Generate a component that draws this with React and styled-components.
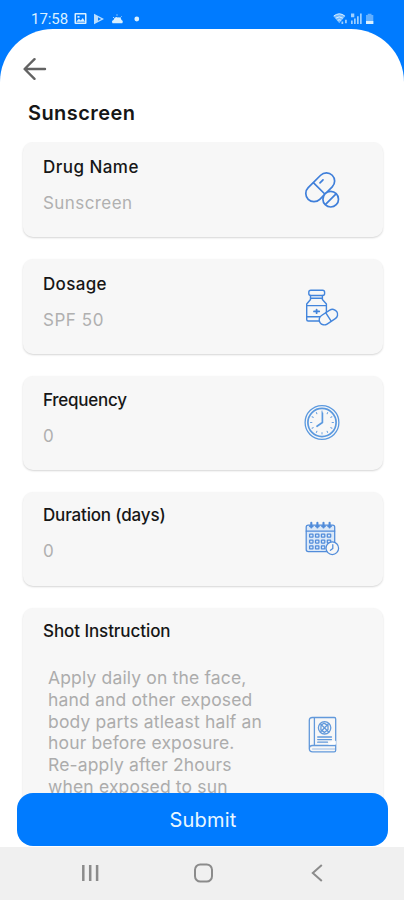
import React from "react";
import styled, { createGlobalStyle } from "styled-components";

const GlobalStyle = createGlobalStyle`
  * { box-sizing: border-box; }
  body { margin: 0; background: #007bff; }
`;

const Screen = styled.div`
  display: flex;
  flex-direction: column;
  width: 404px;
  height: 900px;
  overflow: hidden;
  background: #007bff;
  font-family: Inter, sans-serif;
`;

const StatusBar = styled.header`
  display: flex;
  align-items: center;
  flex: none;
  height: 29px;
  padding: 9px 28px 0 31px;
  color: #d9f0ff;
`;

const Clock = styled.span`
  width: 43px;
  font: 400 15px/20px Roboto, sans-serif;
  letter-spacing: -0.05px;
`;

const StatusIcons = styled.svg`
  display: block;
  margin-left: ${(p) => (p.$end ? "auto" : "0")};
`;

const Sheet = styled.main`
  display: flex;
  flex-direction: column;
  flex: 1;
  min-height: 0;
  background: #fff;
  border-radius: 53px 53px 0 0;
`;

const BackButton = styled.button`
  display: block;
  flex: none;
  width: 24px;
  height: 24px;
  margin: 28px 0 0 23px;
  padding: 0;
  border: 0;
  background: none;
  color: #636363;
`;

const Title = styled.h1`
  flex: none;
  margin: 19px 0 0 28px;
  font-size: 20px;
  line-height: 26px;
  font-weight: 600;
  letter-spacing: 0.42px;
  color: #161616;
`;

const Fields = styled.section`
  display: flex;
  flex-direction: column;
  gap: 22px;
  height: 668px;
  flex: none;
  margin-top: 16px;
  padding: 0 21px 0 23px;
  overflow: hidden;
`;

const Card = styled.article`
  display: flex;
  flex: none;
  justify-content: space-between;
  align-items: ${(p) => (p.$tall ? "flex-start" : "center")};
  height: ${(p) => p.$height}px;
  padding: 0 39px 0 20px;
  border-radius: 10px;
  background: #f7f7f7;
  box-shadow: 0 1px 2px rgba(0, 0, 0, 0.17);
`;

const CardText = styled.div`
  align-self: flex-start;
  padding-top: ${(p) => p.$top}px;
`;

const Label = styled.h2`
  margin: 0;
  font-size: 17px;
  line-height: 24px;
  font-weight: 500;
  letter-spacing: ${(p) => p.$tracking || 0}px;
  color: #161616;
`;

const Value = styled.p`
  margin: 12px 0 0;
  font-size: 17px;
  line-height: 24px;
  letter-spacing: ${(p) => p.$tracking || 0}px;
  color: #b0b0b0;
`;

const Instruction = styled.p`
  width: 224px;
  margin: 24px 0 0 5px;
  font-size: 17.5px;
  line-height: 21.75px;
  letter-spacing: 0.16px;
  color: #acacac;
  white-space: nowrap;
`;

const FieldIcon = styled.svg`
  flex: none;
  width: 42px;
  height: 42px;
  margin-top: ${(p) => p.$offset || 0}px;
  fill: none;
  stroke: ${(p) => p.$tone || "#4385dc"};
  stroke-width: ${(p) => p.$weight || 1.5};
  stroke-linecap: round;
  stroke-linejoin: round;
`;

const Submit = styled.button`
  position: relative;
  flex: none;
  height: 53px;
  margin: -17px 16px 0 17px;
  padding: 2px 0 0 1px;
  border: 0;
  border-radius: 16px;
  background: #007bff;
  color: #e9f7ff;
  font: 400 20px/51px Inter, sans-serif;
  letter-spacing: 0.2px;
`;

const NavBar = styled.nav`
  display: flex;
  align-items: center;
  justify-content: space-between;
  flex: none;
  height: 53px;
  padding: 0 76px 1px 79px;
  background: #f0f0f0;
  color: #8b8b8b;
`;

const NavIcon = styled.svg`
  display: block;
  width: 22px;
  height: 22px;
  fill: none;
  stroke: currentColor;
  stroke-width: 2;
`;

const PillsIcon = () => (
  <FieldIcon viewBox="0 0 42 42" $weight="1.7" $tone="#3f7fda">
    <rect x="1.1" y="10.2" width="34" height="16.4" rx="8.2" transform="rotate(-45 18 18.2)" />
    <path d="M11.6 13.8 22.8 25M18 13.8l3-3" />
    <circle cx="28.7" cy="30.2" r="7.8" fill="#f7f7f7" />
    <path d="m23.8 35.2 10-10" />
  </FieldIcon>
);

const BottleIcon = () => (
  <FieldIcon viewBox="0 0 42 42" $weight="1.4">
    <rect x="6.8" y="4.2" width="15.8" height="5.3" rx="2" />
    <path d="M8.5 9.5v4L4.7 18v15.5q0 1.5 1.5 1.5h16.5q1.7 0 1.7-1.5V18l-4-4.5v-4M9 12.3h11M4.7 19.6h19.7M4.7 30.8h15" />
    <path d="M12 25.4h5.2M14.6 23.6v3.6" strokeWidth="1.8" />
    <rect x="16.4" y="26" width="20" height="10.2" rx="5.1" fill="#f7f7f7" transform="rotate(-33 26.4 31.1)" />
    <path d="m23.8 26.8 5.2 8" />
  </FieldIcon>
);

const ticks = Array.from({ length: 12 }, (_, i) => i * 30);

const ClockIcon = () => (
  <FieldIcon viewBox="0 0 42 42" $weight="1.3" $tone="#5b99df">
    <circle cx="20" cy="20.5" r="16.9" />
    <circle cx="20" cy="20.5" r="14.1" strokeWidth="1.7" />
    {ticks.map((angle) => (
      <path key={angle} d="M20 9v1.4" strokeWidth="0.9" transform={`rotate(${angle} 20 20.5)`} />
    ))}
    <path d="M20.4 11v9.5l-5.4 3.8" strokeWidth="1.7" />
  </FieldIcon>
);

const CalendarIcon = () => (
  <FieldIcon viewBox="0 0 42 42" $weight="1.25" $tone="#518cda">
    <rect x="4.2" y="7" width="28.5" height="26.5" rx="2" fill="#dce9f8" />
    <path d="M4.2 13h28.5" />
    {[9.3, 15.4, 21.5, 27.6].map((x) => (
      <path key={x} d={`M${x} 4.8v4.6M${x - 1.3} 8.2h2.6`} strokeWidth="2.1" />
    ))}
    {[16.2, 22, 27.8].map((y) =>
      [7.6, 13.5, 19.4, 25.3].map((x) => (
        <rect key={`${x}-${y}`} x={x} y={y} width="3.4" height="3" rx="0.4" />
      ))
    )}
    <circle cx="30.3" cy="30.2" r="6.3" fill="#f7f7f7" />
    <path d="M30.8 26.7v3.8l-2.4 1.8" />
  </FieldIcon>
);

const BookIcon = () => (
  <FieldIcon viewBox="0 0 42 42" $weight="1.3" $tone="#6299db" $offset="106">
    <path d="M10.4 3.5h22q1.3 0 1.3 1.5v31.2q0 1.7-1.5 1.7H10.6q-3.3 0-3.3-3.3V6.5q0-3 3.1-3ZM12.4 3.5v28M7.3 34.6q0-3.1 3.3-3.1h23.1" />
    <path d="M10.5 35h23" strokeWidth="0.6" />
    <circle cx="22.6" cy="13.8" r="6.2" />
    <path d="m18.6 10 8 8M26.5 9.8l-7.8 8M19 11.6l3-2.5 4 2.5v4l-3.6 2.8-3.5-2.5ZM15.7 23h13.8M15.7 25.6h13.8M15.7 28.2h9.8" />
    <path d="M27 30q2-3.3 6.7-2.8v2.8Z" fill="#fff" stroke="#fff" strokeWidth="0.7" />
  </FieldIcon>
);

const fields = [
  { label: "Drug Name", value: "Sunscreen", height: 95, top: 13, Icon: PillsIcon, lt: 0.46, vt: 0.42 },
  { label: "Dosage", value: "SPF 50", height: 95, top: 13, Icon: BottleIcon, lt: 0.33, vt: 0.55 },
  { label: "Frequency", value: "0", height: 94, top: 12, Icon: ClockIcon, lt: -0.25, vt: 0 },
  { label: "Duration (days)", value: "0", height: 94, top: 11, Icon: CalendarIcon, lt: -0.16, vt: 0 },
];

export default function App() {
  return (
    <>
      <GlobalStyle />
      <Screen>
        <StatusBar>
          <Clock>17:58</Clock>
          <StatusIcons width="70" height="16" viewBox="0 0 70 16" fill="currentColor">
            <path fillRule="evenodd" d="M1.5 2h10q1 0 1 1v9q0 1-1 1h-10q-1 0-1-1V3q0-1 1-1ZM2 3.5v8h9v-8Z" />
            <path d="m2.3 10.8 2.5-3 2 1.7 2-2.6 2.2 3.9ZM3.5 5h2v1.7h-2Z" />
            <path d="M20 2.8 30 8l-10 5.2Z" opacity=".85" />
            <path d="m24 6.3 3.2 1.7-3.2 1.7Z" fill="#007bff" />
            <path d="M38.5 12.2q-1.4-2.4 1-3.2 1.2-4 4.3-2.5 3.2-1 3.7 2.6 2.1 1 .8 3.1Z" />
            <path d="m39 6 .8.8M43 3.5v1M47.5 5.5l-1 1" stroke="currentColor" />
            <circle cx="62.8" cy="8" r="2.4" />
          </StatusIcons>
          <StatusIcons $end width="43" height="16" viewBox="0 0 43 16" fill="currentColor">
            <path d="M.3 5q6-5 12 0l-6 7.2Z" opacity=".55" />
            <path d="M.8 5q5.5-4.3 11 0M2.8 7.2q3.5-2.7 7 0M4.7 9.3q1.7-1.2 3.2 0" fill="none" stroke="currentColor" strokeWidth="1" />
            <path d="M8.5 10.5h1.7V13H8.5ZM12 8.8h1.8v3.5H12ZM18 2.5h3.3v3.8H18ZM18 9.5h1.7V13H18ZM21 7.5h1.7V13H21ZM24 5.3h1.7V13H24ZM27 2.5h1.7V13H27Z" opacity=".72" />
            <path d="M33 4h1.7V2.7h3.8V4h1.8v9H33Z" opacity=".45" />
            <path d="M33 10h7.3v3H33Z" />
          </StatusIcons>
        </StatusBar>
        <Sheet>
          <BackButton aria-label="Back">
            <svg width="24" height="24" viewBox="0 0 24 24" fill="none" stroke="currentColor" strokeWidth="2.4" strokeLinecap="round" strokeLinejoin="round">
              <path d="M22 12H2M11.5 2.2 1.6 12l9.9 9.8" />
            </svg>
          </BackButton>
          <Title>Sunscreen</Title>
          <Fields>
            {fields.map(({ label, value, height, top, Icon, lt, vt }) => (
              <Card key={label} $height={height}>
                <CardText $top={top}>
                  <Label $tracking={lt}>{label}</Label>
                  <Value $tracking={vt}>{value}</Value>
                </CardText>
                <Icon />
              </Card>
            ))}
            <Card $height={240} $tall>
              <CardText $top={11}>
                <Label $tracking={-0.08}>Shot Instruction</Label>
                <Instruction>
                  Apply daily on the face,<br />
                  hand and other exposed<br />
                  body parts atleast half an<br />
                  hour before exposure.<br />
                  Re-apply after 2hours<br />
                  when exposed to sun
                </Instruction>
              </CardText>
              <BookIcon />
            </Card>
          </Fields>
          <Submit>Submit</Submit>
        </Sheet>
        <NavBar>
          <NavIcon viewBox="0 0 22 22">
            <path d="M4.3 3v16M11.2 3v16M18.1 3v16" strokeWidth="2.5" />
          </NavIcon>
          <NavIcon viewBox="0 0 22 22">
            <rect x="2" y="2.5" width="17" height="17" rx="5.3" />
          </NavIcon>
          <NavIcon viewBox="0 0 22 22">
            <path d="m15.8 3-9 8 9 8" />
          </NavIcon>
        </NavBar>
      </Screen>
    </>
  );
}
